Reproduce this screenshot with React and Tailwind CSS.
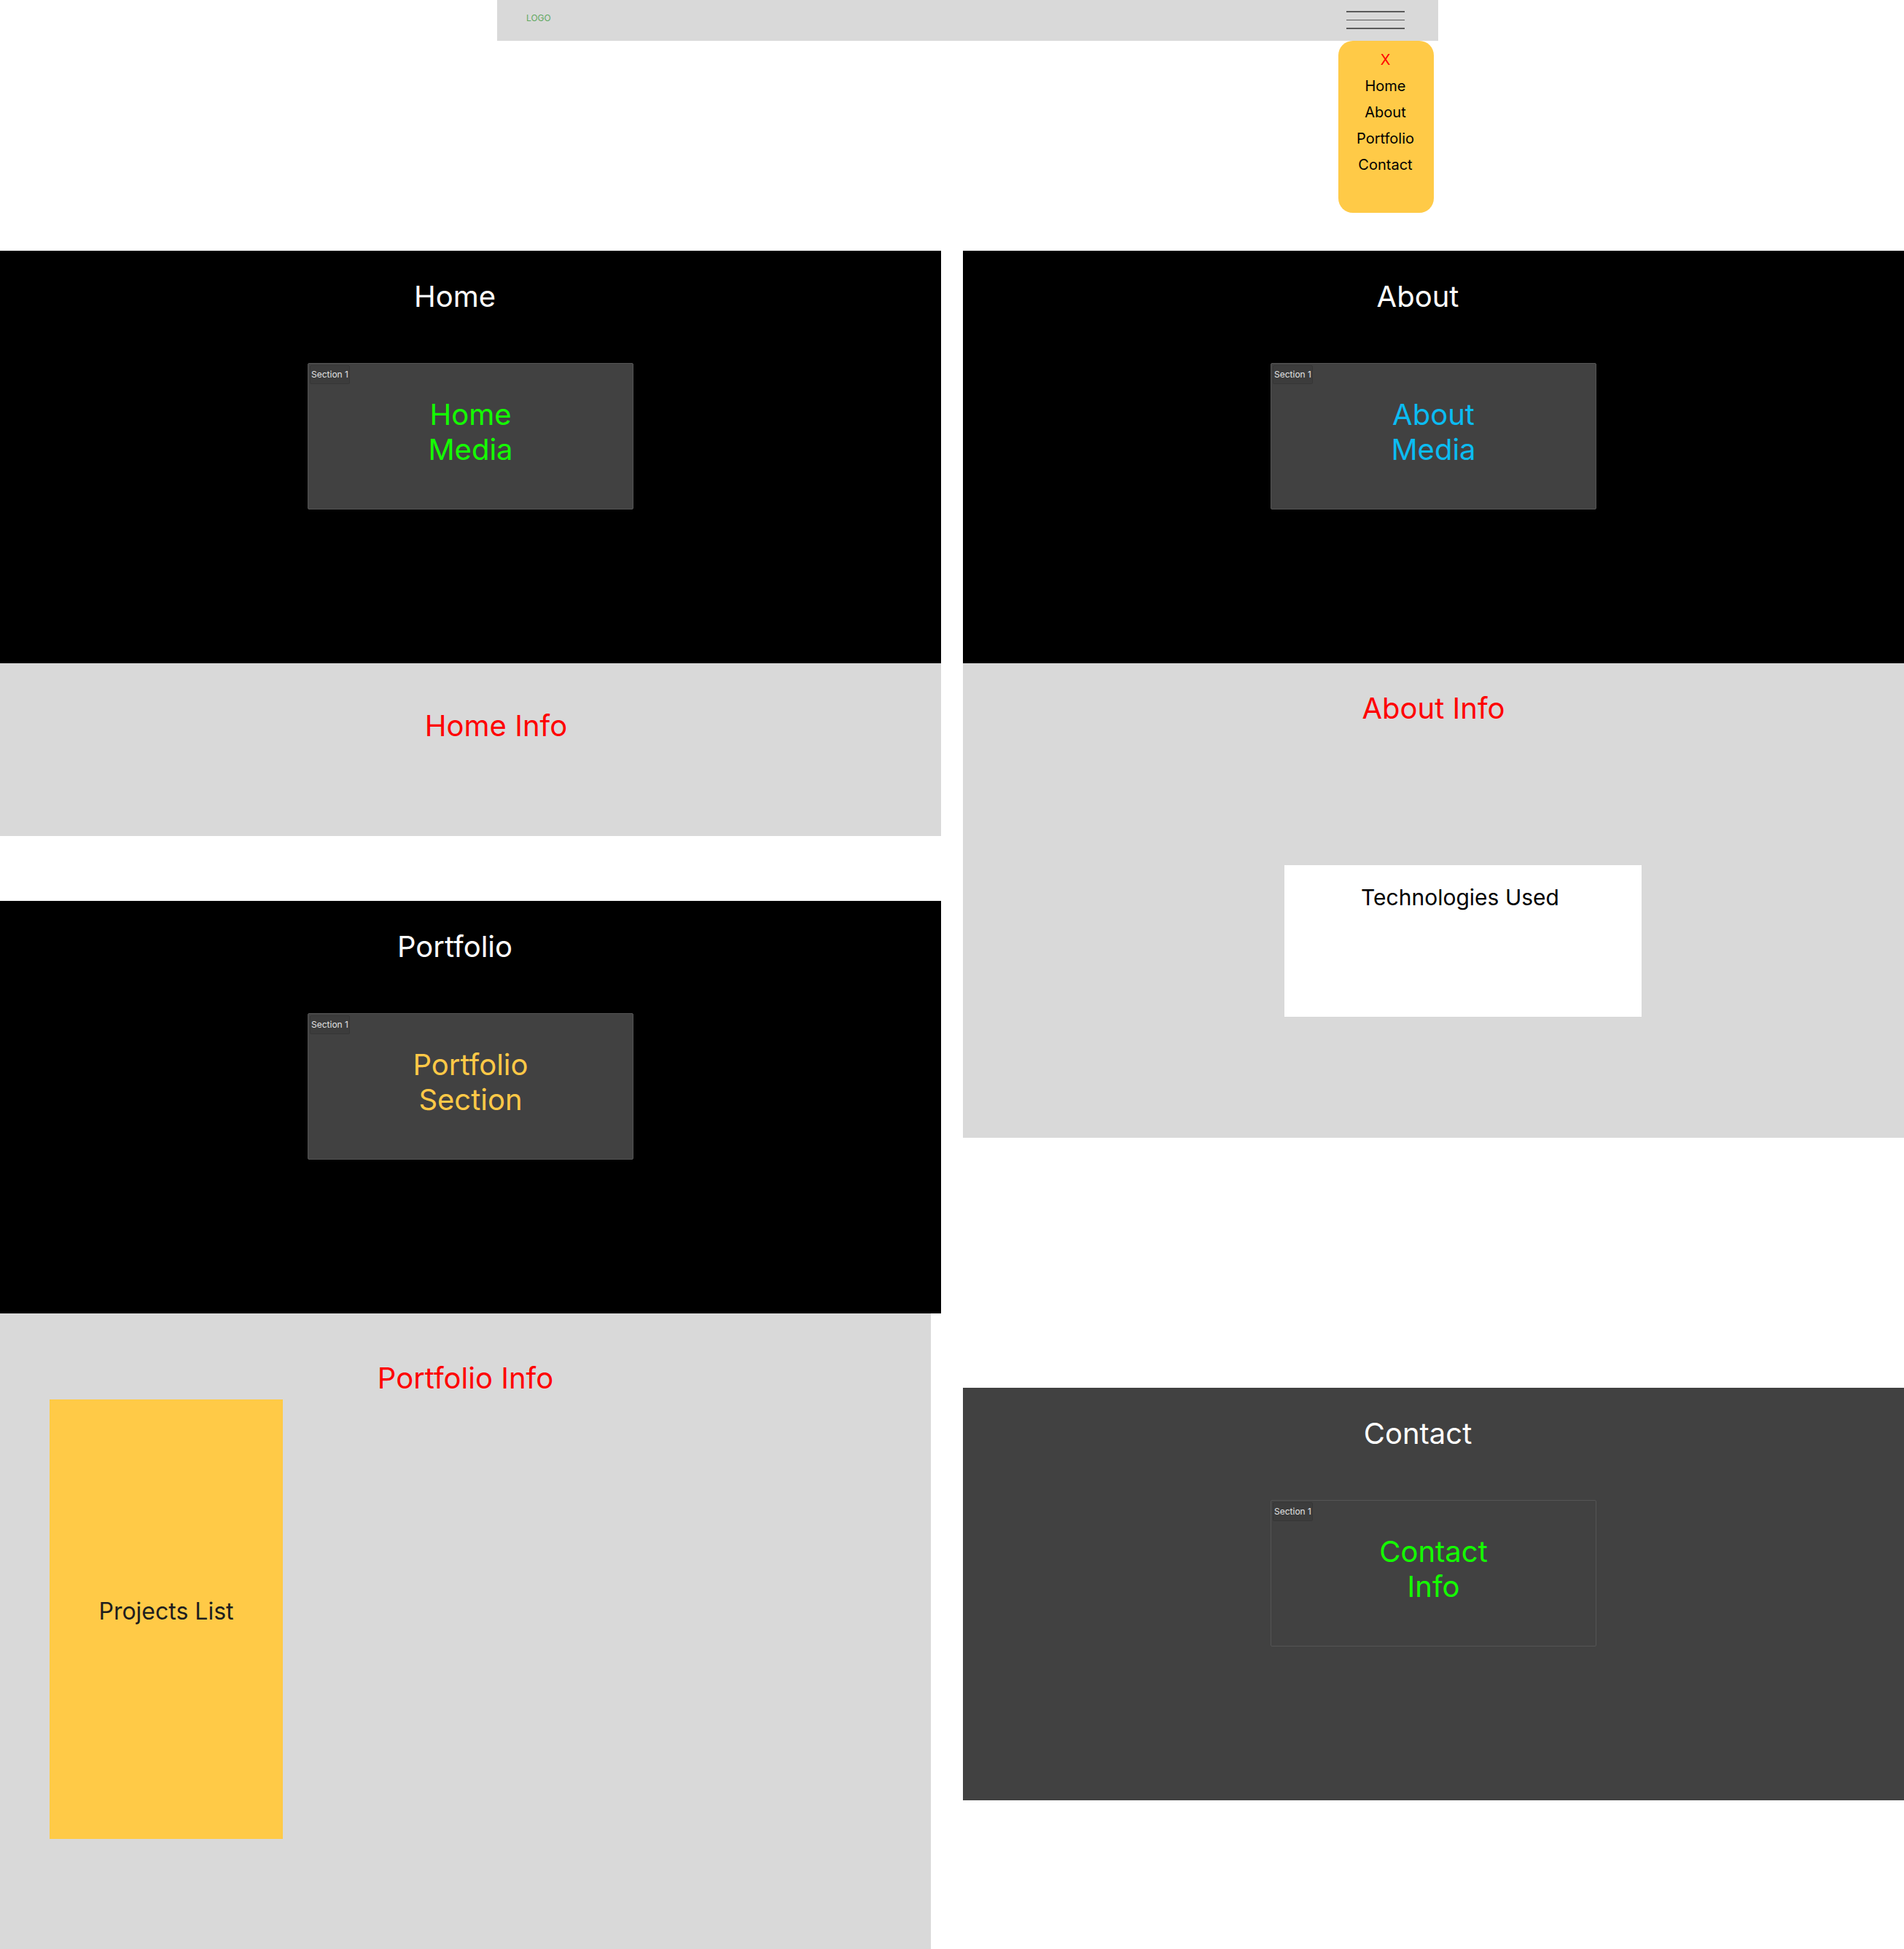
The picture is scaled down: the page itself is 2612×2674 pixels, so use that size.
const menuItems = ['Home', 'About', 'Portfolio', 'Contact'];

function MediaBox({ lines, color }) {
  return (
    <div className="relative mx-auto w-[447px] h-[201px] bg-[#414141] border border-[#545454] rounded-[2px] pt-[46px] text-center">
      <div className="absolute top-[2px] left-[2px] w-[55px] h-[26px] rounded-[2px] bg-[#3c3c3c] border border-[#363636] flex items-center justify-center text-[12px] leading-4 text-[#e2e2e2]">
        Section 1
      </div>
      {lines.map((l) => (
        <div key={l} className={`text-[40px] leading-[48px] ${color}`}>
          {l}
        </div>
      ))}
    </div>
  );
}

function DarkSection({ title, lines, color, bg = 'bg-black' }) {
  return (
    <section className={`h-[566px] ${bg} pt-[39px]`}>
      <h2 className="pr-[43px] text-center text-[40px] leading-[48px] text-white">{title}</h2>
      <div className="mt-[67px]">
        <MediaBox lines={lines} color={color} />
      </div>
    </section>
  );
}

export default function App() {
  return (
    <div className="w-[2612px] h-[2674px] bg-white overflow-hidden font-['Inter','Noto_Sans',sans-serif]">
      {/* Nav */}
      <header className="relative ml-[682px] w-[1291px] h-[56px] bg-[#d9d9d9] flex justify-between pl-[40px] pr-[46px]">
        <span className="pt-[17px] text-[12px] leading-4 text-[#5fa85f]">LOGO</span>
        <div className="pt-[15px] flex flex-col gap-[10px] w-[80px]">
          <span className="h-[1.5px] bg-[#5a5a5a]"></span>
          <span className="h-[1.5px] bg-[#5a5a5a]"></span>
          <span className="h-[1.5px] bg-[#5a5a5a]"></span>
        </div>
        <nav className="absolute top-[56px] right-[6px] w-[131px] h-[236px] bg-[#ffca47] rounded-[20px] pt-[14px] pr-[2px] flex flex-col items-center gap-3 text-[20px] leading-6">
          <span className="text-[#ff0000]">X</span>
          {menuItems.map((m) => (
            <span key={m} className="text-black">{m}</span>
          ))}
        </nav>
      </header>

      <div className="mt-[288px] flex gap-[30px]">
        {/* Left column */}
        <div className="w-[1291px] flex flex-col">
          <DarkSection title="Home" lines={['Home', 'Media']} color="text-[#14ff00]" />
          <section className="h-[237px] bg-[#d9d9d9] pt-[62px] pl-[70px] text-center">
            <h3 className="text-[40px] leading-[48px] text-[#ff0000]">Home Info</h3>
          </section>
          <div className="mt-[89px]">
            <DarkSection title="Portfolio" lines={['Portfolio', 'Section']} color="text-[#ffc947]" />
          </div>
          <section className="w-[1277px] h-[872px] bg-[#d9d9d9] pt-[65px]">
            <h3 className="text-center text-[40px] leading-[48px] text-[#ff0000]">Portfolio Info</h3>
            <div className="mt-[5px] ml-[68px] w-[320px] h-[603px] bg-[#ffca47] flex items-center justify-center pb-[22px]">
              <span className="text-[32px] leading-[38px] text-[#1e1e1e]">Projects List</span>
            </div>
          </section>
        </div>

        {/* Right column */}
        <div className="w-[1291px] flex flex-col">
          <DarkSection title="About" lines={['About', 'Media']} color="text-[#0bbcf2]" />
          <section className="h-[651px] bg-[#d9d9d9] pt-[38px]">
            <h3 className="text-center text-[40px] leading-[48px] text-[#ff0000]">About Info</h3>
            <div className="mt-[191px] ml-[441px] w-[490px] h-[208px] bg-white pt-[26px] pr-[8px] text-center">
              <span className="text-[30px] leading-[36px] text-black">Technologies Used</span>
            </div>
          </section>
          <div className="mt-[343px]">
            <DarkSection title="Contact" lines={['Contact', 'Info']} color="text-[#14ff00]" bg="bg-[#414141]" />
          </div>
        </div>
      </div>
    </div>
  );
}
